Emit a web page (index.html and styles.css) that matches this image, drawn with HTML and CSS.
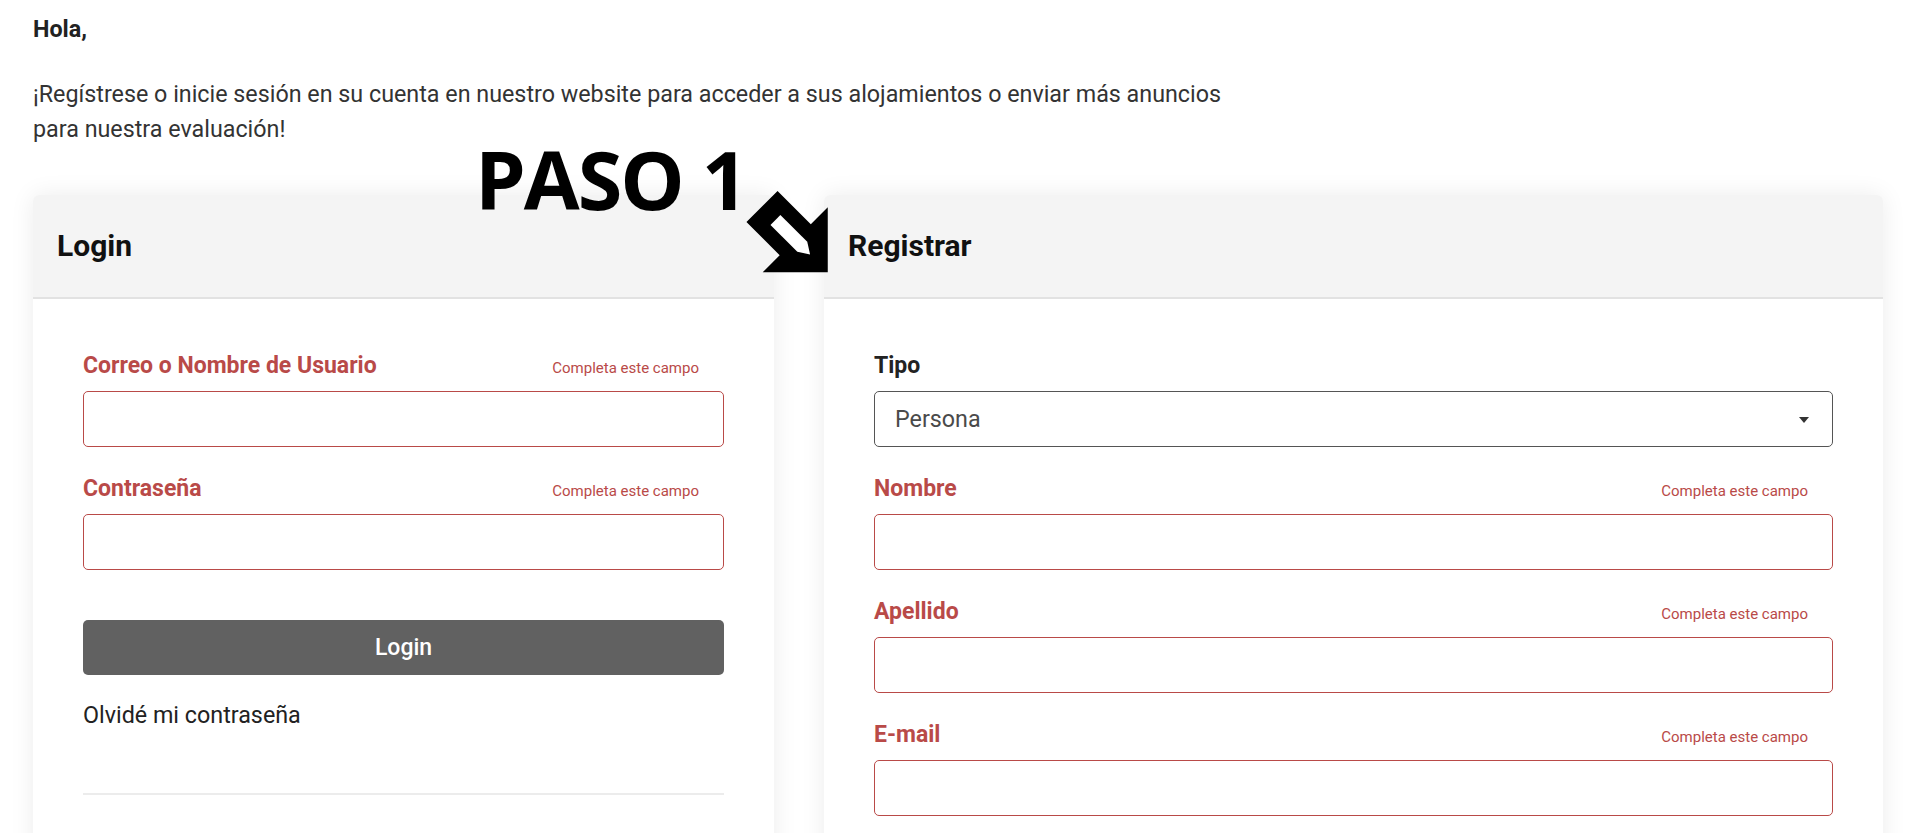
FILE: index.html
```html
<!DOCTYPE html>
<html lang="es">
<head>
  <meta charset="utf-8">
  <title>Login / Registrar</title>
  <link rel="stylesheet" href="styles.css">
</head>
<body>

  <main class="page">
    <p class="greeting">Hola,</p>
    <p class="intro">¡Regístrese o inicie sesión en su cuenta en nuestro website para acceder a sus alojamientos o enviar más anuncios para nuestra evaluación!</p>

    <div class="accounts">
      <section class="card">
        <header class="card-header"><h2>Login</h2></header>
        <div class="card-body">
          <div class="field has-error">
            <div class="field-label">
              <label for="login-user">Correo o Nombre de Usuario</label>
              <span class="field-error">Completa este campo</span>
            </div>
            <input id="login-user" class="input" type="text">
          </div>
          <div class="field has-error">
            <div class="field-label">
              <label for="login-pass">Contraseña</label>
              <span class="field-error">Completa este campo</span>
            </div>
            <input id="login-pass" class="input" type="password">
          </div>
          <button class="btn-login">Login</button>
          <a class="forgot" href="#">Olvidé mi contraseña</a>
          <hr>
        </div>
      </section>

      <section class="card">
        <header class="card-header"><h2>Registrar</h2></header>
        <div class="card-body">
          <div class="field">
            <div class="field-label">
              <label for="reg-type">Tipo</label>
            </div>
            <div class="select-wrap">
              <select id="reg-type" class="input">
                <option>Persona</option>
                <option>Empresa</option>
              </select>
            </div>
          </div>
          <div class="field has-error">
            <div class="field-label">
              <label for="reg-name">Nombre</label>
              <span class="field-error">Completa este campo</span>
            </div>
            <input id="reg-name" class="input" type="text">
          </div>
          <div class="field has-error">
            <div class="field-label">
              <label for="reg-last">Apellido</label>
              <span class="field-error">Completa este campo</span>
            </div>
            <input id="reg-last" class="input" type="text">
          </div>
          <div class="field has-error">
            <div class="field-label">
              <label for="reg-mail">E-mail</label>
              <span class="field-error">Completa este campo</span>
            </div>
            <input id="reg-mail" class="input" type="email">
          </div>
        </div>
      </section>
    </div>

    <!-- annotation drawn over the screenshot -->
    <p class="step-note">PASO 1</p>
    <svg class="step-arrow" viewBox="0 0 100 100">
      <g transform="translate(24 24.5) rotate(45)">
        <polygon points="0,-22 47,-22 47,-46 93,0 47,46 47,22 0,22" fill="#000"/>
        <polygon points="19,-7 57,-7 68,0 57,7 19,7" fill="#fff"/>
      </g>
    </svg>
  </main>

</body>
</html>
```

FILE: styles.css
```css
body {
  margin: 0;
  font-family: 'Roboto', 'Liberation Sans', sans-serif;
  font-size: 23.3px;
  line-height: 35px;
  color: #333;
  background: #fff;
}

.page {
  position: relative;
  padding: 12px 37px 0 33px;
}

.greeting {
  margin: 0 0 30px;
  font-weight: 700;
  color: #222;
}

.intro {
  margin: 0 0 48px;
  max-width: 1200px;
}

.accounts {
  display: grid;
  grid-template-columns: 741px 1fr;
  gap: 50px;
  align-items: start;
}

.card {
  background: #fff;
  border-radius: 6px 6px 0 0;
  box-shadow: 0 0 24px rgba(0, 0, 0, 0.08);
  min-height: 720px;
}

.card-header {
  background: #f4f4f4;
  padding: 33px 24px;
  border-bottom: 2px solid #e2e2e2;
  border-radius: 6px 6px 0 0;
}

.card-header h2 {
  margin: 0;
  font-size: 30px;
  line-height: 36px;
  font-weight: 700;
  color: #111;
}

.card-body {
  padding: 50px 50px 40px;
}

.field {
  margin-bottom: 25px;
}

.field-label {
  display: flex;
  justify-content: space-between;
  align-items: baseline;
  margin-bottom: 8px;
  padding-right: 25px;
  line-height: 34px;
}

.field-label label {
  font-size: 23px;
  font-weight: 700;
  color: #222;
}

.field-error {
  font-size: 15px;
  line-height: 1;
  color: #b94a48;
}

.has-error label {
  color: #b94a48;
}

.input {
  display: block;
  width: 100%;
  height: 56px;
  box-sizing: border-box;
  padding: 0 20px;
  border: 1px solid #999;
  border-radius: 5px;
  background: #fff;
  font: 23.3px 'Roboto', 'Liberation Sans', sans-serif;
  color: #444;
}

.has-error .input {
  border-color: #b94a48;
}

.select-wrap {
  position: relative;
}

.select-wrap select {
  appearance: none;
  -webkit-appearance: none;
  border-color: #555;
  color: #4a4a4a;
}

.select-wrap::after {
  content: "";
  position: absolute;
  right: 24px;
  top: 50%;
  margin-top: -2px;
  border-left: 5px solid transparent;
  border-right: 5px solid transparent;
  border-top: 6px solid #333;
}

.btn-login {
  display: block;
  width: 100%;
  height: 55px;
  margin-top: 50px;
  border: 0;
  border-radius: 5px;
  background: #616161;
  color: #fff;
  font: 500 23px 'Roboto', 'Liberation Sans', sans-serif;
}

.forgot {
  display: block;
  margin-top: 23px;
  color: #222;
  text-decoration: none;
}

hr {
  border: 0;
  border-top: 2px solid #ececec;
  margin: 60px 0 0;
}

.step-note {
  position: absolute;
  left: 475px;
  top: 149px;
  margin: 0;
  font-family: 'Open Sans', 'DejaVu Sans', sans-serif;
  font-weight: 700;
  font-size: 81px;
  line-height: 0.75;
  letter-spacing: -2px;
  color: #000;
}

.step-arrow {
  position: absolute;
  left: 738px;
  top: 182px;
  width: 100px;
  height: 100px;
}
```
